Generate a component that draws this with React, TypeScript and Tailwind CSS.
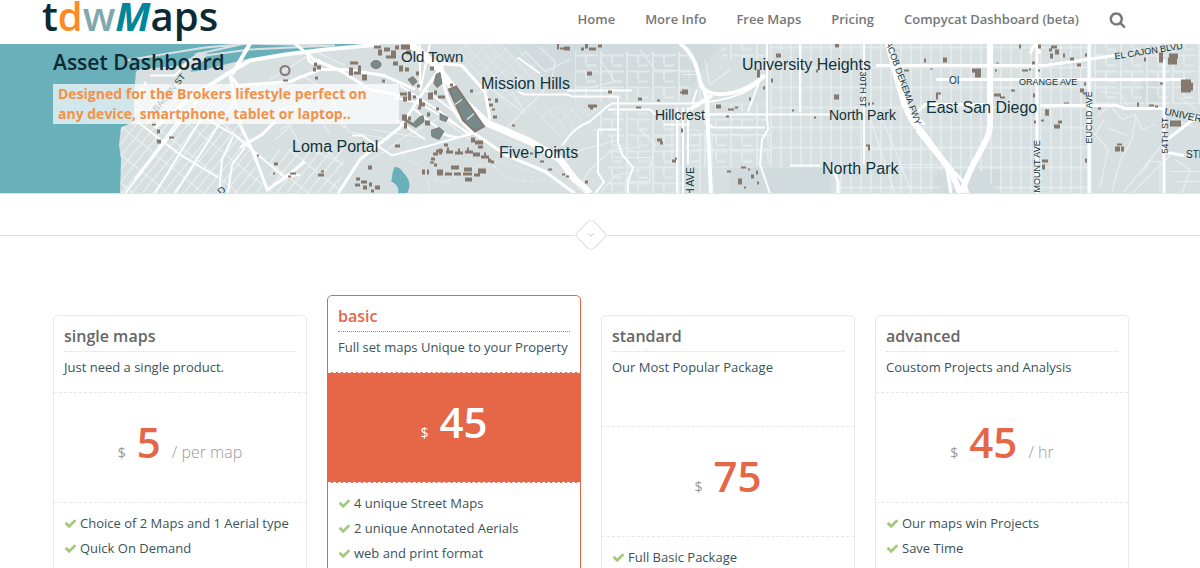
import { ChevronDown } from "lucide-react";

const NAV_LINKS = [
  "Home",
  "More Info",
  "Free Maps",
  "Pricing",
  "Compycat Dashboard (beta)",
];

type Plan = {
  name: string;
  summary: string;
  price: string;
  unit?: string;
  features: string[];
  featured?: boolean;
  tall?: boolean;
};

const PLANS: Plan[] = [
  {
    name: "single maps",
    summary: "Just need a single product.",
    price: "5",
    unit: "/ per map",
    features: ["Choice of 2 Maps and 1 Aerial type", "Quick On Demand"],
  },
  {
    name: "basic",
    summary: "Full set maps Unique to your Property",
    price: "45",
    features: [
      "4 unique Street Maps",
      "2 unique Annotated Aerials",
      "web and print format",
    ],
    featured: true,
  },
  {
    name: "standard",
    summary: "Our Most Popular Package",
    price: "75",
    features: ["Full Basic Package"],
    tall: true,
  },
  {
    name: "advanced",
    summary: "Coustom Projects and Analysis",
    price: "45",
    unit: "/ hr",
    features: ["Our maps win Projects", "Save Time"],
  },
];

// x, y, width, height
const BUILDINGS = [
  [374, 46, 7, 3], [378, 50, 4, 6], [384, 48, 6, 4], [391, 51, 5, 8], [386, 56, 5, 3],
  [395, 46, 4, 4], [401, 45, 9, 5], [406, 51, 5, 4], [393, 62, 5, 4], [399, 66, 4, 6],
  [350, 62, 8, 3], [349, 68, 4, 8], [354, 72, 7, 3], [358, 66, 3, 9], [362, 75, 5, 6],
  [314, 63, 3, 4], [317, 66, 4, 4], [313, 68, 3, 4], [315, 77, 3, 3], [283, 80, 5, 2],
  [382, 80, 3, 3], [405, 68, 4, 4], [416, 72, 3, 4], [430, 67, 4, 4], [417, 85, 3, 3],
  [400, 93, 7, 3], [403, 97, 4, 5], [408, 92, 3, 9], [413, 96, 3, 3], [419, 99, 3, 8],
  [422, 103, 3, 4], [418, 107, 3, 3], [428, 93, 5, 7], [434, 91, 3, 4], [438, 96, 7, 3],
  [402, 115, 5, 6], [404, 123, 3, 6], [408, 117, 3, 4], [427, 113, 3, 4], [425, 121, 5, 5],
  [436, 108, 3, 3], [450, 84, 3, 3], [470, 90, 3, 3], [488, 99, 3, 2], [495, 99, 3, 4],
  [489, 104, 4, 3], [492, 109, 3, 2], [493, 116, 4, 3], [512, 125, 3, 2],
  [444, 144, 4, 3], [471, 138, 4, 5], [475, 141, 8, 4], [478, 146, 5, 3],
  [436, 150, 7, 3], [433, 153, 5, 3], [431, 158, 4, 3], [430, 162, 4, 2], [434, 164, 3, 3],
  [439, 149, 3, 6], [446, 151, 7, 3], [447, 148, 2, 5], [455, 152, 8, 3], [458, 149, 2, 4],
  [465, 151, 8, 3], [467, 148, 2, 5], [473, 153, 7, 4], [481, 156, 8, 3], [484, 153, 2, 4],
  [488, 159, 3, 4], [491, 161, 3, 3], [422, 170, 3, 5], [427, 170, 2, 5],
  [437, 170, 6, 6], [445, 173, 7, 3], [451, 166, 8, 4], [454, 173, 7, 3], [464, 168, 8, 4],
  [463, 173, 9, 3], [478, 169, 8, 5], [465, 178, 7, 4], [474, 174, 6, 3],
  [555, 150, 3, 2], [530, 153, 3, 2], [540, 161, 4, 2], [548, 169, 4, 2], [562, 174, 3, 2],
  [566, 176, 3, 2], [585, 181, 3, 3],
  [557, 44, 2, 6], [560, 48, 4, 2], [564, 47, 6, 4], [581, 48, 3, 3], [585, 44, 3, 5],
  [589, 48, 7, 3], [598, 45, 4, 3], [587, 72, 5, 4], [608, 91, 4, 3], [588, 105, 9, 3],
  [590, 108, 3, 2], [638, 98, 4, 3], [657, 100, 3, 2], [636, 107, 5, 2], [682, 90, 6, 5],
  [680, 92, 8, 2], [716, 105, 5, 4], [728, 109, 6, 2], [735, 107, 3, 2], [726, 116, 3, 2],
  [749, 98, 2, 3], [771, 79, 2, 4], [776, 54, 5, 4], [757, 70, 3, 8], [763, 87, 2, 3],
  [792, 110, 2, 2], [657, 139, 5, 3], [660, 142, 3, 3], [672, 160, 4, 3], [675, 158, 2, 2],
  [681, 129, 2, 4], [727, 171, 4, 2], [741, 167, 5, 2], [748, 169, 2, 2], [751, 175, 3, 4],
  [738, 179, 4, 6], [757, 182, 2, 3], [756, 171, 2, 4], [744, 187, 2, 2],
  [835, 44, 4, 4], [834, 95, 5, 5], [814, 117, 2, 2], [816, 70, 2, 3], [868, 103, 2, 3],
  [872, 103, 2, 2], [866, 145, 4, 2], [868, 147, 2, 4], [924, 59, 2, 4], [943, 58, 4, 5],
  [904, 70, 5, 2], [930, 69, 3, 1], [972, 69, 9, 4], [975, 73, 6, 5], [936, 93, 5, 2],
  [936, 94, 2, 6], [994, 94, 7, 3], [1000, 97, 5, 2], [1011, 90, 4, 2], [996, 63, 3, 1],
  [995, 70, 2, 2], [1022, 70, 6, 2], [1029, 69, 2, 2], [1032, 62, 3, 3], [1038, 70, 2, 2],
  [1019, 45, 2, 4], [1038, 45, 3, 4], [1049, 49, 3, 3], [1051, 46, 6, 3], [1055, 50, 4, 5],
  [1050, 54, 3, 5], [1063, 54, 2, 4], [1070, 58, 4, 3], [1077, 64, 4, 3], [1085, 54, 2, 3],
  [1080, 89, 4, 4], [1083, 93, 3, 2], [1084, 83, 2, 3], [1033, 94, 2, 4], [1064, 103, 5, 1],
  [1045, 110, 4, 6], [1034, 121, 2, 3], [1041, 120, 3, 2], [1054, 125, 6, 4], [1058, 121, 4, 3],
  [1042, 160, 6, 3], [1042, 165, 3, 5], [1085, 159, 2, 4], [1098, 108, 3, 2],
  [1115, 147, 5, 5], [1117, 144, 5, 2], [1121, 147, 3, 5], [1137, 103, 2, 4], [1149, 105, 5, 2],
  [1155, 106, 3, 2], [1160, 83, 3, 2], [1159, 53, 4, 10], [1169, 54, 4, 5], [1144, 58, 2, 4],
  [1168, 58, 9, 7], [1173, 54, 5, 5], [1181, 80, 10, 13], [1189, 83, 4, 8],
  [257, 155, 2, 2], [274, 163, 4, 3], [273, 173, 2, 2], [290, 173, 6, 2], [288, 176, 3, 2],
  [318, 174, 6, 3], [321, 171, 3, 2], [368, 166, 4, 4], [356, 178, 4, 3], [361, 181, 6, 3],
  [355, 184, 5, 3], [363, 186, 4, 4], [369, 183, 3, 4], [375, 186, 5, 4], [371, 190, 3, 3],
  [395, 145, 5, 3], [152, 123, 4, 3], [157, 130, 3, 4], [169, 137, 5, 2], [157, 140, 4, 4],
];

const box = ([x, y, w, h]: number[]) => `M${x} ${y}h${w}v${h}h${-w}z`;

const CheckIcon = () => (
  <svg viewBox="0 0 1792 1792" className="h-[13px] w-[13px]" fill="#a3c77b" aria-hidden="true">
    <path d="M1671 566q0 40-28 68l-724 724-136 136q-28 28-68 28t-68-28l-136-136-362-362q-28-28-28-68t28-68l136-136q28-28 68-28t68 28l294 295 656-657q28-28 68-28t68 28l136 136q28 28 28 68z" />
  </svg>
);

const SearchIcon = () => (
  <svg viewBox="0 0 1792 1792" className="h-[17px] w-[17px]" fill="currentColor" aria-hidden="true">
    <path d="M1216 832q0-185-131.500-316.500t-316.500-131.500-316.500 131.500-131.500 316.500 131.500 316.500 316.500 131.500 316.500-131.500 131.500-316.500zm512 832q0 52-38 90t-90 38q-54 0-90-38l-343-342q-179 124-399 124-143 0-273.500-55.500t-225-150-150-225-55.500-273.500 55.500-273.500 150-225 225-150 273.500-55.500 273.500 55.500 225 150 150 225 55.500 273.500q0 220-124 399l343 343q37 37 37 90z" />
  </svg>
);

const CityMap = () => (
  <svg
    viewBox="0 44 1200 150"
    preserveAspectRatio="xMidYMid slice"
    className="block h-full w-full"
    fill="none"
    aria-hidden="true"
  >
    <defs>
      <pattern id="beach" width="8" height="22" patternUnits="userSpaceOnUse" patternTransform="rotate(39)">
        <path d="M0 0V22M0 0H8" stroke="#f4f7f7" strokeWidth="1.6" />
      </pattern>
      <pattern id="hills" width="9" height="15" patternUnits="userSpaceOnUse" patternTransform="rotate(-42)">
        <path d="M0 0V15M0 0H9" stroke="#e9eff0" strokeWidth="1.2" />
      </pattern>
      <pattern id="blocks" width="10" height="20" patternUnits="userSpaceOnUse">
        <path d="M1 0V20M0 8H10" stroke="#e9eef0" strokeWidth="1.4" />
      </pattern>
      <pattern id="wide" width="26" height="16" patternUnits="userSpaceOnUse">
        <path d="M3 0V16M14 8V16M3 8H26M14 2H24" stroke="#e9efef" strokeWidth="1.4" />
      </pattern>
    </defs>

    <rect y="44" width="1200" height="150" fill="#d7dfe1" />
    <path d="M500 44H720L690 90H560ZM940 170H1000V194H930ZM1140 82H1163V102H1140Z M730 166H830V194H730Z" fill="#d1dadc" />

    {/* minor streets */}
    <path d="M134 96L142 72 228 80 240 125 266 194H120V128L134 122Z" fill="url(#beach)" />
    <path d="M270 150L345 148 340 194H270Z" fill="url(#beach)" />
    <path d="M462 44H520L550 75 520 112 492 108 450 62Z" fill="url(#hills)" />
    <path d="M520 106L600 108 560 138Z" fill="url(#hills)" />
    <path d="M575 52H690V102H575ZM600 112H682V194H608V135H592Z" fill="url(#wide)" />
    <path d="M690 130H770V168H690ZM700 104H766V126H700ZM722 44H768V60H722Z" fill="url(#wide)" />
    <path d="M770 44H1092V194H1000L975 165 950 194 940 170 900 110 880 44ZM770 44H880L940 170V194H838L830 168H770Z" fill="url(#blocks)" />
    <path d="M1092 44H1200V105H1092Z" fill="url(#wide)" />
    <g stroke="#eaeff0" strokeWidth="1.2">
      <path d="M270 80L315 52 345 66M285 92L300 75 322 88M290 98L325 88 350 108M270 112L310 103 330 135M280 130L320 110 345 128M275 140L290 127 300 145M330 95L348 132 390 140" />
      <path d="M400 140L440 118 470 140M372 130L420 138M370 160L388 150 400 140M310 150L345 165M480 80L525 115M475 95L520 80M505 130L545 90M512 92L525 112M525 52L545 72 570 60M540 48L555 62 552 80M600 60L615 82 590 88M640 50L655 70 700 72M705 60L710 85 730 70M682 75H700V100" />
      <path d="M578 190L590 170 612 150 640 148M560 165L582 150 620 140M600 194L615 176 640 170M615 158H650V182H625V194M672 112V165M700 132V194M712 132V165M640 130L655 145 650 170M690 135H770M692 150H770" />
      <path d="M1098 116L1110 106 1122 120 1135 115 1142 130 1155 125M1100 188L1108 150 1095 135 1104 120M1112 192L1120 162 1132 140 1136 115M1124 192L1160 148M1132 194L1170 156M1140 176L1150 162H1160V192M1175 160L1190 170 1182 194M1172 120L1196 128M1170 172H1200M1178 182H1200M1100 92L1120 94 1128 106M1105 128L1128 136M1180 98L1196 110" />
      <path d="M870 118L895 194M882 118L912 194M865 150H935M872 165H938" />
    </g>
    <path d="M496 168C470 155 455 194 430 178M400 150C410 170 425 155 430 194M493 165C500 178 520 185 545 180" stroke="#eaeff0" strokeDasharray="4 3" />

    {/* ocean, inlet and bay */}
    <path d="M0 44H380L340 49 245 60 205 70 185 74 136 72 134 96 134 122 121 128 119 145 121 160 120 194H0Z" fill="#6ab0bb" />
    <path d="M92 44L97 44" stroke="#d9e0e2" />
    <path d="M137 70L180 66 198 53 207 53 205 60 190 72 205 72 250 59 250 72 205 90 136 98Z" fill="#d7dfe1" />
    <path d="M125 61L205 48 250 44M195 55L245 44 335 46 250 50 205 56" stroke="#d9e0e2" strokeWidth="2" />
    <path d="M395 167L400 169 404 174C410 180 411 186 407 194H398C400 187 394 183 391 182 393 178 391 174 395 167Z" fill="#6ab0bb" />
    <path d="M276 90L284 86 288 95 280 106Z" fill="#b5d4d9" />

    {/* main streets */}
    <g stroke="#fff" strokeWidth="2">
      <path d="M146 82L136 104M150 76H175L190 60M125 194L200 98M135 180L185 112M155 194L210 105M175 194L235 100M137 122L180 155 218 178M190 110L235 136 285 178 300 175M219 194L222 160 233 137M228 194L232 165 245 148" />
      <path d="M230 76L240 125 252 150 268 192M268 190L285 178 305 162M240 148L262 135 275 122" strokeWidth="3" />
      <path d="M230 76L238 86 290 82 320 70 345 70 384 76 415 90M338 194L360 160 400 128 425 90 438 72" strokeWidth="3" />
      <path d="M352 136H362L392 156 430 146 476 133M395 98L420 104 470 134M412 108L450 138M425 90L462 118M400 86L440 112 470 136M396 120L425 140M458 138L430 132M420 44V90M430 44L420 92" />
      <path d="M518 58L540 74M518 92L525 95H567L572 97H618V143M567 91H632M598 130H618M598 130V173L604 183 595 194M618 143L622 155 633 168 628 182V194" strokeWidth="2" />
      <path d="M562 146C570 135 575 128 590 122L606 108 612 104H690C730 102 755 92 765 75M608 110H650L656 115M664 125H690M700 115H830M710 128H765M748 112L762 75M767 44V118L768 130 762 140 760 165 770 194M800 44V113" />
      <path d="M677 108V194M683 108V194M688 108V165M692 105L697 90M864 44V165M790 166H820" />
      <path d="M876 66H1045L1080 61 1115 56M936 80H1185M1040 106H1117L1125 109H1163M1037 44V194M1089 44V194" strokeWidth="3" />
      <path d="M1164 60V194M1167 140L1200 115M1167 153L1184 156M1030 54L1035 44 1040 54M918 112L925 105H985M832 166L838 182V194" strokeWidth="3" />
    </g>

    {/* freeways */}
    <g stroke="#fff" strokeLinejoin="round">
      <path d="M380 45L325 50 285 55 250 61 228 74 190 98 155 128M250 44L232 75" strokeWidth="4" />
      <path d="M295 44L314 60 342 72 370 90 400 96M310 55A6 5 0 1 0 320 60" strokeWidth="3" />
      <path d="M410 44L436 66 462 100 488 124 530 142 560 160 575 180 590 194" strokeWidth="7" />
      <path d="M442 66C442 95 455 120 476 135L505 155 545 172 575 194M440 64L462 66 485 92 490 120" strokeWidth="3" />
      <path d="M480 130L525 148M530 150L585 192M496 160L540 175" stroke="#dfe6e7" strokeWidth="1" />
      <path d="M680 44C695 55 698 72 700 82 708 94 708 110 708 130L711 194M700 85C708 100 740 98 765 76M712 96L690 110" strokeWidth="4" />
      <path d="M704 115H714M706 123L714 128" strokeWidth="2" />
      <path d="M990 44V125C990 145 970 160 962 194M888 44C900 90 905 118 920 130L948 168C955 180 958 186 960 194M918 130L952 172" strokeWidth="6" />
      <path d="M948 168C960 176 966 185 968 194M946 165L951 194M908 112L925 125" strokeWidth="3" />
    </g>

    <path d={BUILDINGS.map(box).join("")} fill="#85786f" />
    <g fill="#76898b" stroke="#85786f">
      <path d="M449 90L456 87 484 127 475 132 463 121Z" strokeWidth="2" />
      <path d="M455 105L462 100M467 120L474 114" stroke="#d9e0e2" strokeWidth="1.5" />
      <path d="M436 75L440 73 442 84 437 88 434 84ZM408 80L413 77 417 82 413 86ZM403 118L413 124 419 118 423 116 424 122 416 128 404 121ZM431 131L439 128 444 132 439 140 432 137ZM440 114L448 118 446 122 440 120Z" />
      <ellipse cx="376" cy="65" rx="5" ry="4" />
      <path d="M1047 111H1048V115H1047ZM1171 122H1180V126H1171Z" strokeWidth="2" />
    </g>
    <circle cx="285" cy="71" r="4.5" stroke="#85786f" strokeWidth="2" />

    <g fill="#12343b" fontFamily="'Liberation Sans', Arial, sans-serif" fontSize="16">
      <text x="401" y="62" fontSize="15">Old Town</text>
      <text x="481" y="89">Mission Hills</text>
      <text x="292" y="152">Loma Portal</text>
      <text x="499" y="158">Five Points</text>
      <text x="655" y="120" fontSize="14">Hillcrest</text>
      <text x="742" y="70">University Heights</text>
      <text x="829" y="120" fontSize="14">North Park</text>
      <text x="822" y="174">North Park</text>
      <text x="926" y="113">East San Diego</text>
      <g fontSize="10">
        <text transform="translate(157 113) rotate(-51)" fontSize="9">BACON ST</text>
        <text x="949" y="84">OI</text>
        <text x="1019" y="85" fontSize="9">ORANGE AVE</text>
        <text transform="translate(1115 60) rotate(-9)" fontSize="9">EL CAJON BLVD</text>
        <text transform="translate(860 72) rotate(90)" fontSize="9">30TH ST</text>
        <text transform="translate(884 39) rotate(70)" fontSize="9">JACOB DEKEMA FWY</text>
        <text transform="translate(1092 144) rotate(-90)" fontSize="9">EUCLID AVE</text>
        <text transform="translate(1040 193) rotate(-90)" fontSize="9">MOUNT AVE</text>
        <text transform="translate(1168 154) rotate(-90)" fontSize="9">54TH ST</text>
        <text transform="translate(1164 115) rotate(12)">UNIVERSITY</text>
        <text x="1186" y="158">STREAMVIEW</text>
        <text transform="translate(694 208) rotate(-90)">4TH AVE</text>
        <text transform="translate(221 196) rotate(-40)">D</text>
      </g>
    </g>
  </svg>
);

const PlanCard = ({ plan }: { plan: Plan }) => {
  const { name, summary, price, unit, features, featured, tall } = plan;
  return (
    <section
      className={`rounded-[5px] border bg-white ${
        featured ? "border-[#e66648]" : "mt-5 border-[#e8e8e8]"
      }`}
    >
      <header className={`px-[10px] pt-2 ${tall ? "h-[110px]" : "h-[76px]"}`}>
        <h3
          className={`border-b border-dotted pb-[3px] text-base font-semibold ${
            featured
              ? "border-[#e66648] text-[#e66648]"
              : "border-[#dddddd] text-[#666666]"
          }`}
        >
          {name}
        </h3>
        <p className="pt-[5px] text-[13px] leading-5">{summary}</p>
      </header>
      <div
        className={`flex h-[111px] items-baseline justify-center gap-[11px] border-y border-dashed pt-5 ${
          featured
            ? "border-white bg-[#e66648] text-white"
            : "border-[#e8e8e8] text-[#999999]"
        }`}
      >
        <span className="text-sm">$</span>
        <span
          className={`text-[42px] leading-[58px] font-semibold ${
            featured ? "text-white" : "text-[#e66648]"
          }`}
        >
          {price}
        </span>
        {unit && <span className="text-base font-light">{unit}</span>}
      </div>
      <ul className="px-[10px] pt-2 pb-6 text-[13px] leading-[25px]">
        {features.map((feature) => (
          <li key={feature} className="flex items-center gap-[3px]">
            <CheckIcon />
            {feature}
          </li>
        ))}
      </ul>
    </section>
  );
};

const App = () => {
  return (
    <div className="min-h-screen bg-white font-['Open_Sans',sans-serif] text-[#3b5357]">
      <header className="h-11 pr-[18px]">
        <div className="mx-auto flex max-w-[1098px] items-start justify-between pr-[11px]">
          <a
            href="#"
            className="text-[40px] leading-8 font-semibold text-[#0b2a33]"
          >
            t<span className="text-[#ff8a24]">d</span>
            <span className="text-[#7fa9ae]">w</span>
            <span className="font-bold text-[#00869b] italic">M</span>aps
          </a>
          <nav className="flex items-center gap-[30px] pt-[9px] pr-[3px] text-[13px] leading-5 font-semibold text-[#777777]">
            {NAV_LINKS.map((label) => (
              <a key={label} href="#">
                {label}
              </a>
            ))}
            <button type="button" aria-label="Search">
              <SearchIcon />
            </button>
          </nav>
        </div>
      </header>

      <div className="grid h-[150px] border-b border-[#e0e6e7]">
        <div className="col-start-1 row-start-1 h-[149px]">
          <CityMap />
        </div>
        <div className="z-10 col-start-1 row-start-1 pr-[18px]">
          <div className="mx-auto max-w-[1076px] pt-1">
            <h1 className="text-[21px] leading-7 font-semibold text-[#0c2b33]">
              Asset Dashboard
            </h1>
            <p className="mt-2 max-w-[346px] bg-white/70 px-[5px] text-sm leading-5 font-bold text-[#f3914a]">
              Designed for the Brokers lifestyle perfect on any device,
              smartphone, tablet or laptop..
            </p>
          </div>
        </div>
      </div>

      <div className="flex items-center pt-[25px]">
        <div className="h-px flex-1 bg-[#e0e0e0]" />
        <div className="m-1 flex h-6 w-6 rotate-45 items-center justify-center rounded-[5px] border border-[#dddddd]">
          <ChevronDown className="h-[10px] w-[10px] -rotate-45 text-[#bbbbbb]" />
        </div>
        <div className="h-px flex-1 bg-[#e0e0e0]" />
        <div className="h-px w-[18px] bg-[#e0e0e0]" />
      </div>

      <main className="pt-11 pr-[18px]">
        <div className="mx-auto grid max-w-[1076px] grid-cols-4 items-start gap-5">
          {PLANS.map((plan) => (
            <PlanCard key={plan.name} plan={plan} />
          ))}
        </div>
      </main>
    </div>
  );
};

export default App;
